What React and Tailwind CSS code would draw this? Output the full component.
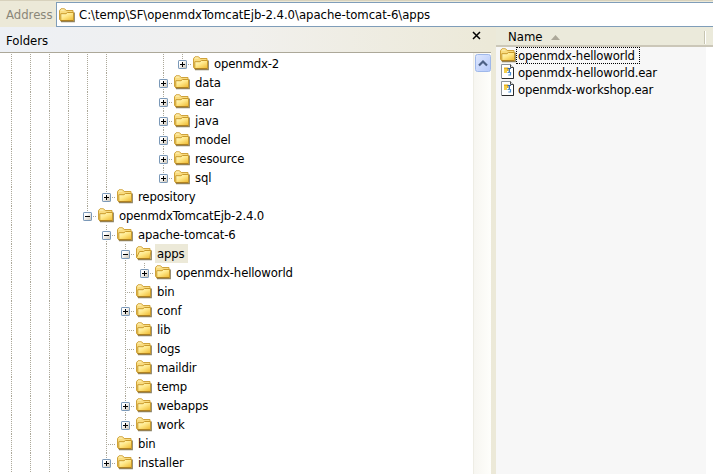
import React from "react";

// Guides: one character per level. "|" line, "." blank.
// Box kinds: plus, minus, none. "last" ends the vertical guide at this row.
const rows = [
  ["||||||..|", "plus", "openmdx-2", true],
  ["||||||..", "plus", "data", false],
  ["||||||..", "plus", "ear", false],
  ["||||||..", "plus", "java", false],
  ["||||||..", "plus", "model", false],
  ["||||||..", "plus", "resource", false],
  ["||||||..", "plus", "sql", true],
  ["|||||", "plus", "repository", true],
  ["||||", "minus", "openmdxTomcatEjb-2.4.0", true],
  ["||||.", "minus", "apache-tomcat-6", false],
  ["||||.|", "minus", "apps", false],
  ["||||.||", "plus", "openmdx-helloworld", true],
  ["||||.|", "none", "bin", false],
  ["||||.|", "plus", "conf", false],
  ["||||.|", "none", "lib", false],
  ["||||.|", "none", "logs", false],
  ["||||.|", "none", "maildir", false],
  ["||||.|", "none", "temp", false],
  ["||||.|", "plus", "webapps", false],
  ["||||.|", "plus", "work", true],
  ["||||.", "none", "bin", false],
  ["||||.", "plus", "installer", true],
];

const Folder = ({ open }) => (
  <svg width="17" height="16" viewBox="0 0 17 16" className="shrink-0">
    <defs>
      <linearGradient id="fold" x1="0" y1="0" x2="0.8" y2="1">
        <stop offset="0" stopColor="#fffbd0" />
        <stop offset="0.5" stopColor="#ffe889" />
        <stop offset="1" stopColor="#f0bf3c" />
      </linearGradient>
    </defs>
    <path d="M3 14.7H16.3V5.5" fill="none" stroke="#8d8468" strokeWidth="1.2" />
    <path d="M1.5 12.5V3.5L3 1.8H6.6L8.2 3.5H15V13.5H2.5Z" fill="#f9dc80" stroke="#cfa23a" />
    <path d="M3 3H6.4" stroke="#fff6c4" />
    <path
      d={open ? "M1.6 12.5L4.5 6.5H8.5L10 5.5H16L14.8 13.5H2.5Z" : "M2.8 13.5V6.7H8L9.4 5.5H15.5V13.5Z"}
      fill="url(#fold)"
      stroke="#c99a2c"
    />
    <path d="M2.5 13.8H15.5" stroke="#a87a1c" />
  </svg>
);

const Box = ({ kind }) => (
  <svg width="9" height="9" viewBox="0 0 9 9" className="shrink-0">
    <defs>
      <linearGradient id="box" x1="0" y1="0" x2="1" y2="1">
        <stop offset="0.3" stopColor="#fff" />
        <stop offset="1" stopColor="#c9c1b2" />
      </linearGradient>
    </defs>
    <rect x="0.5" y="0.5" width="8" height="8" rx="0.6" fill="url(#box)" stroke="#7a98b8" />
    <path d={kind === "plus" ? "M2 4.5H7M4.5 2V7" : "M2 4.5H7"} stroke="#000" />
  </svg>
);

const VLine = ({ half }) => (
  <span
    className={
      "w-px bg-[repeating-linear-gradient(to_bottom,#aca899_0_1px,transparent_1px_2px)] " +
      (half ? "h-[10px]" : "h-[20px]")
    }
  />
);

const Row = ({ guides, kind, label, last }) => (
  <div className="flex h-[19px] shrink-0">
    {guides.split("").map((g, i) => (
      <span key={i} className="flex h-[19px] w-[19px] shrink-0 justify-center overflow-hidden">
        {g === "|" && <VLine />}
      </span>
    ))}
    <span className="relative h-[19px] w-[19px] shrink-0 overflow-hidden">
      <span className="flex justify-center">
        <VLine half={last} />
      </span>
      <span className="absolute top-[10px] left-[9px] h-px w-[10px] bg-[repeating-linear-gradient(to_right,#aca899_0_1px,transparent_1px_2px)]" />
      {kind !== "none" && (
        <span className="absolute top-[6px] left-[5px]">
          <Box kind={kind} />
        </span>
      )}
    </span>
    <span className="flex h-[19px] w-[19px] shrink-0 pt-px">
      <Folder open={label === "apps"} />
    </span>
    <span
      className={
        "ml-px h-[19px] pl-[2px] leading-[19px] tracking-[-0.16px] whitespace-nowrap " +
        (label === "apps" ? "bg-[#ece9d8] pr-[4px]" : "")
      }
    >
      {label}
    </span>
  </div>
);

const EarFile = () => (
  <svg width="15" height="16" viewBox="0 0 15 16" className="shrink-0">
    <path d="M1.5 0.5H10.5L13.5 3.5V14.5H1.5Z" fill="#fff" stroke="#8c9299" />
    <path d="M13.5 3.5V14.5H2" fill="none" stroke="#26282b" />
    <path d="M10.5 0.5V3.5H13.5" fill="#d8dde2" stroke="#444" />
    <path d="M4 3.5H8.5V7H4Z" fill="#e9b01b" />
    <path d="M4 5H7V9H4Z" fill="#f4cf4c" />
    <path d="M7.5 4.5H11M9.3 4V8" stroke="#2f66b0" strokeWidth="1.2" />
    <path d="M7.5 8.5H10.5V11H8.3" fill="none" stroke="#4a8fd2" strokeWidth="1.2" />
  </svg>
);

export default function App() {
  return (
    <div className="flex h-[474px] w-[713px] flex-col overflow-hidden bg-white font-['DejaVu_Sans_Condensed','DejaVu_Sans',sans-serif] text-[13px] text-black [font-stretch:condensed]">
      <div className="flex h-[27px] shrink-0 border-t border-[#d8d2bd] bg-[#ece9d8]">
        <div className="w-[56px] pl-[6px] leading-[27px] text-[#8a8778]">Address</div>
        <div className="mt-px flex h-[25px] flex-1 items-center border border-r-0 border-[#7f9db9] bg-white pl-px">
          <Folder />
          <span className="pl-[4px] tracking-[-0.04px] whitespace-nowrap">C:\temp\SF\openmdxTomcatEjb-2.4.0\apache-tomcat-6\apps</span>
        </div>
      </div>
      <div className="flex min-h-0 flex-1">
        <div className="flex w-[491px] shrink-0 flex-col">
          <div className="flex h-[26px] shrink-0 justify-between border-b border-[#aca899] bg-gradient-to-r from-[#edf0f5] via-[#f1f0ed] to-[#ece9d8] pr-[10px] pl-[6px]">
            <span className="leading-[27px]">Folders</span>
            <svg width="9" height="9" viewBox="0 0 9 9" className="mt-[4px]">
              <path d="M1 1L8 8M8 1L1 8" stroke="#000" strokeWidth="1.5" />
            </svg>
          </div>
          <div className="flex min-h-0 flex-1">
            <div className="min-w-0 flex-1 overflow-hidden pt-px pl-[2px]">
              {rows.map(([guides, kind, label, last], i) => (
                <Row key={i} guides={guides} kind={kind} label={label} last={last} />
              ))}
            </div>
            <div className="w-[18px] border-l border-[#eeede5] bg-gradient-to-r from-[#f7f6f1] to-[#fefefb] pt-px">
              <svg width="17" height="19" viewBox="0 0 17 19">
                <defs>
                  <linearGradient id="scroll" x1="0" y1="0" x2="1" y2="1">
                    <stop offset="0" stopColor="#dfe8fe" />
                    <stop offset="1" stopColor="#b5c9fa" />
                  </linearGradient>
                </defs>
                <rect x="1.5" y="0.5" width="15" height="17" rx="2" fill="url(#scroll)" stroke="#9fb8ea" />
                <path d="M5 11.5L9 7.5L13 11.5" fill="none" stroke="#4d6185" strokeWidth="2.2" />
              </svg>
            </div>
          </div>
        </div>
        <div className="w-[5px] shrink-0 bg-[#ece9d8]" />
        <div className="flex flex-1 flex-col bg-white">
          <div className="flex h-[20px] shrink-0 items-center border-b-2 border-[#cbc7b8] bg-[#ebeadb] pt-[2px] pl-[12px]">
            <span>Name</span>
            <svg width="9" height="5" viewBox="0 0 9 5" className="ml-[8px]">
              <path d="M0 5L4.5 0L9 5Z" fill="#aca899" />
            </svg>
            <span className="mr-[7px] ml-auto h-[13px] w-[2px] border-r border-l border-r-white border-l-[#c7c5b2]" />
          </div>
          <div className="w-[210px] flex-1 bg-[#f7f7f7] tracking-[-0.16px]">
            <div className="flex h-[17px]">
              <span className="flex w-[20px] pl-[3px]"><Folder /></span>
              <span className="h-[17px] w-[124px] border border-dotted border-black pl-px leading-[15px] whitespace-nowrap">openmdx-helloworld</span>
            </div>
            {["openmdx-helloworld.ear", "openmdx-workshop.ear"].map((name) => (
              <div key={name} className="flex h-[17px]">
                <span className="flex w-[22px] pl-[4px]"><EarFile /></span>
                <span className="leading-[17px] whitespace-nowrap">{name}</span>
              </div>
            ))}
          </div>
        </div>
      </div>
    </div>
  );
}
